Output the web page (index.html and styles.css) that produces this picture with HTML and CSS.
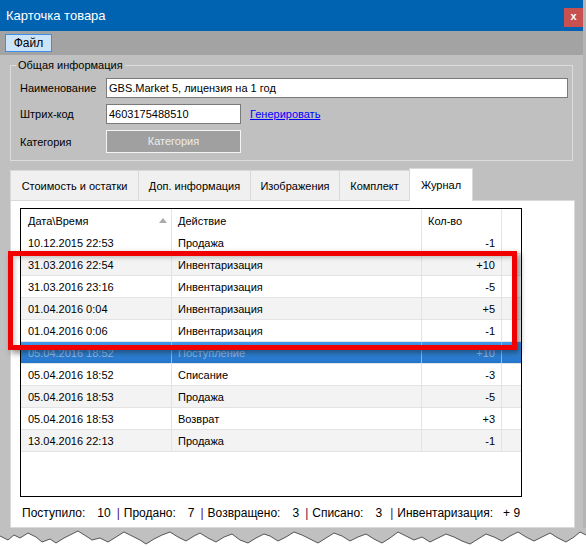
FILE: index.html
```html
<!DOCTYPE html>
<html lang="ru">
<head>
<meta charset="utf-8">
<title>Карточка товара</title>
<link rel="stylesheet" href="styles.css">
</head>
<body>
<div class="window">
  <div class="frame">
    <div class="titlebar">
      <span class="title">Карточка товара</span>
      <span class="close">x</span>
    </div>
    <div class="menubar"><span class="menu-item">Файл</span></div>
    <div class="content">
      <div class="group">
        <div class="group-title">Общая информация</div>
        <div class="field-row">
          <span class="field-label">Наименование</span>
          <div class="input input-wide">GBS.Market 5, лицензия на 1 год</div>
        </div>
        <div class="field-row">
          <span class="field-label">Штрих-код</span>
          <div class="input input-code">4603175488510</div>
          <a class="link" href="#">Генерировать</a>
        </div>
        <div class="field-row">
          <span class="field-label">Категория</span>
          <div class="cat-button">Категория</div>
        </div>
      </div>
      <div class="tabs">
        <div class="tab tab-1">Стоимость и остатки</div>
        <div class="tab tab-2">Доп. информация</div>
        <div class="tab tab-3">Изображения</div>
        <div class="tab tab-4">Комплект</div>
        <div class="tab tab-5 active">Журнал</div>
      </div>
      <div class="panel">
        <div class="list">
          <div class="list-head">
            <div class="head-cell date">Дата\Время<span class="sort"></span></div>
            <div class="head-cell">Действие</div>
            <div class="head-cell">Кол-во</div>
          </div>
          <div class="row"><div class="cell date">10.12.2015 22:53</div><div class="cell">Продажа</div><div class="cell qty">-1</div></div>
          <div class="row alt"><div class="cell date">31.03.2016 22:54</div><div class="cell">Инвентаризация</div><div class="cell qty">+10</div></div>
          <div class="row"><div class="cell date">31.03.2016 23:16</div><div class="cell">Инвентаризация</div><div class="cell qty">-5</div></div>
          <div class="row alt"><div class="cell date">01.04.2016 0:04</div><div class="cell">Инвентаризация</div><div class="cell qty">+5</div></div>
          <div class="row"><div class="cell date">01.04.2016 0:06</div><div class="cell">Инвентаризация</div><div class="cell qty">-1</div></div>
          <div class="row selected"><div class="cell date">05.04.2016 18:52</div><div class="cell">Поступление</div><div class="cell qty">+10</div></div>
          <div class="row"><div class="cell date">05.04.2016 18:52</div><div class="cell">Списание</div><div class="cell qty">-3</div></div>
          <div class="row alt"><div class="cell date">05.04.2016 18:53</div><div class="cell">Продажа</div><div class="cell qty">-5</div></div>
          <div class="row"><div class="cell date">05.04.2016 18:53</div><div class="cell">Возврат</div><div class="cell qty">+3</div></div>
          <div class="row alt"><div class="cell date">13.04.2016 22:13</div><div class="cell">Продажа</div><div class="cell qty">-1</div></div>
        </div>
        <div class="summary"><span>Поступило:</span><span class="num">10</span><span class="sep">|</span><span>Продано:</span><span class="num">7</span><span class="sep">|</span><span>Возвращено:</span><span class="num">3</span><span class="sep">|</span><span>Списано:</span><span class="num">3</span><span class="sep sep-wide">|</span><span>Инвентаризация:</span><span class="num num-last">+ 9</span></div>
      </div>
    </div>
  </div>
  <svg class="torn" width="586" height="18" viewBox="0 0 586 18">
    <polygon class="torn-fill" points="0,0 586,0 586,7 580,4 574,9 566,14 558,10 550,5 542,9 534,13 526,9 518,4 510,8 502,13 494,9 486,6 478,11 470,16 462,13 454,9 446,6 438,10 430,14 422,9 414,12 406,8 398,4 390,10 382,15 374,11 366,6 358,9 350,13 342,8 334,5 326,10 318,15 310,11 302,7 294,4 286,9 278,13 270,8 264,6 256,10 248,15 240,12 232,6 224,9 216,14 208,10 200,5 194,8 186,13 178,9 170,4 162,7 154,11 146,16 140,12 132,8 124,4 116,9 108,14 100,10 92,12 86,8 78,3 72,6 64,10 56,15 50,11 42,14 36,9 28,5 20,10 14,7 8,12 0,8"/>
    <polyline class="torn-line" points="586,7 580,4 574,9 566,14 558,10 550,5 542,9 534,13 526,9 518,4 510,8 502,13 494,9 486,6 478,11 470,16 462,13 454,9 446,6 438,10 430,14 422,9 414,12 406,8 398,4 390,10 382,15 374,11 366,6 358,9 350,13 342,8 334,5 326,10 318,15 310,11 302,7 294,4 286,9 278,13 270,8 264,6 256,10 248,15 240,12 232,6 224,9 216,14 208,10 200,5 194,8 186,13 178,9 170,4 162,7 154,11 146,16 140,12 132,8 124,4 116,9 108,14 100,10 92,12 86,8 78,3 72,6 64,10 56,15 50,11 42,14 36,9 28,5 20,10 14,7 8,12 0,8"/>
  </svg>
  <div class="highlight"></div>
</div>
</body>
</html>
```

FILE: styles.css
```css
html, body {
  margin: 0;
  padding: 0;
  background: #ffffff;
}

body {
  font-family: "Liberation Sans", Arial, sans-serif;
  font-size: 11px;
  color: #000000;
}

.window {
  position: relative;
  width: 586px;
  height: 546px;
  overflow: hidden;
}

.frame {
  width: 583px;
  height: 528px;
  border-right: 3px solid #b4b4b4;
  display: flex;
  flex-direction: column;
}

.titlebar {
  height: 31px;
  flex: none;
  background: #0063b1;
  display: flex;
  align-items: center;
  justify-content: space-between;
  padding-left: 6px;
  color: #ffffff;
  font-size: 13px;
}

.close {
  width: 19px;
  height: 19px;
  margin-top: 4px;
  background: #c75050;
  color: #ffffff;
  font-weight: bold;
  font-size: 11px;
  line-height: 17px;
  text-align: center;
}

.menubar {
  height: 24px;
  flex: none;
  box-sizing: border-box;
  background: #a3a3a3;
  padding: 3px 0 0 5px;
}

.menu-item {
  display: inline-block;
  width: 47px;
  height: 18px;
  box-sizing: border-box;
  background: #cce4f7;
  border: 1px solid #3d8fe8;
  text-align: center;
  line-height: 16px;
  font-size: 12px;
}

.content {
  flex: 1;
  background: #c0c0c0;
  padding: 10px 8px 0 10px;
  display: flex;
  flex-direction: column;
}

.group {
  border: 1px solid #dcdcdc;
  margin-right: 2px;
  padding: 0 0 7px 9px;
}

.group-title {
  width: max-content;
  margin: -8px 0 0 -4px;
  padding: 0 2px;
  background: #c0c0c0;
  line-height: 14px;
}

.field-row {
  display: flex;
  align-items: center;
  margin-top: 6px;
}

.field-label {
  width: 86px;
  flex: none;
}

.input {
  height: 20px;
  box-sizing: border-box;
  border: 1px solid #7a7a7a;
  background: #ffffff;
  padding: 0 2px;
  line-height: 18px;
  white-space: nowrap;
}

.input-wide {
  width: 462px;
}

.input-code {
  width: 135px;
}

.link {
  margin-left: 9px;
  color: #0000ff;
  text-decoration: underline;
}

.cat-button {
  width: 135px;
  height: 23px;
  box-sizing: border-box;
  background: #a0a0a0;
  border: 1px solid #f4f4f4;
  color: #ededed;
  text-align: center;
  line-height: 21px;
}

.tabs {
  display: flex;
  align-items: flex-end;
  height: 32px;
  margin-top: 7px;
  position: relative;
  z-index: 1;
}

.tab {
  height: 30px;
  box-sizing: border-box;
  border: 1px solid #d9d9d9;
  border-bottom: none;
  background: #f0f0f0;
  display: flex;
  align-items: center;
  justify-content: center;
  margin-left: -1px;
  white-space: nowrap;
}

.tab-1 { width: 129px; margin-left: 0; }
.tab-2 { width: 113px; }
.tab-3 { width: 90px; }
.tab-4 { width: 71px; }
.tab-5 { width: 64px; }

.tab.active {
  height: 33px;
  margin-bottom: -1px;
  background: #ffffff;
}

.panel {
  width: 565px;
  height: 328px;
  box-sizing: border-box;
  border: 1px solid #d9d9d9;
  background: #ffffff;
  padding: 7px 0 0 9px;
}

.list {
  width: 502px;
  height: 289px;
  box-sizing: border-box;
  border: 1px solid #000000;
}

.list-head {
  display: grid;
  grid-template-columns: 151px 250px 80px;
  height: 23px;
}

.head-cell {
  border-right: 1px solid #e5e5e5;
  padding-left: 6px;
  display: flex;
  align-items: center;
  white-space: nowrap;
}

.head-cell.date {
  padding-left: 7px;
}

.sort {
  margin-left: auto;
  margin-right: 4px;
  width: 0;
  height: 0;
  border-left: 4px solid transparent;
  border-right: 4px solid transparent;
  border-bottom: 5px solid #ababab;
}

.row {
  display: grid;
  grid-template-columns: 151px 250px 80px;
  height: 22px;
  box-sizing: border-box;
  border-bottom: 1px solid #e3e3e3;
}

.row.alt {
  background: #f3f3f3;
}

.row.selected {
  background: linear-gradient(#409aeb, #2474cc);
  color: rgba(255, 255, 255, 0.5);
}

.cell {
  border-right: 1px solid #e3e3e3;
  padding: 0 6px;
  display: flex;
  align-items: center;
  white-space: nowrap;
}

.row.selected .cell {
  border-right-color: #8cbcee;
}

.cell.date {
  padding-left: 7px;
}

.cell.qty {
  justify-content: flex-end;
}

.summary {
  margin-top: 8px;
  padding-left: 2px;
  line-height: 16px;
  font-size: 12px;
  white-space: nowrap;
}

.num {
  margin-left: 12px;
}

.num-last {
  margin-left: 10px;
}

.sep {
  margin: 0 4px 0 6px;
  color: #4b1050;
}

.sep-wide {
  margin-left: 8px;
}

.torn {
  display: block;
}

.torn-fill {
  fill: #c0c0c0;
}

.torn-line {
  fill: none;
  stroke: #555555;
  stroke-width: 1;
}

.highlight {
  position: absolute;
  left: 8px;
  top: 251px;
  width: 509px;
  height: 99px;
  box-sizing: border-box;
  border: 5px solid #f00000;
  box-shadow: 3px 3px 6px rgba(0, 0, 0, 0.45), inset 2px 2px 4px rgba(0, 0, 0, 0.2);
  z-index: 5;
}
```
